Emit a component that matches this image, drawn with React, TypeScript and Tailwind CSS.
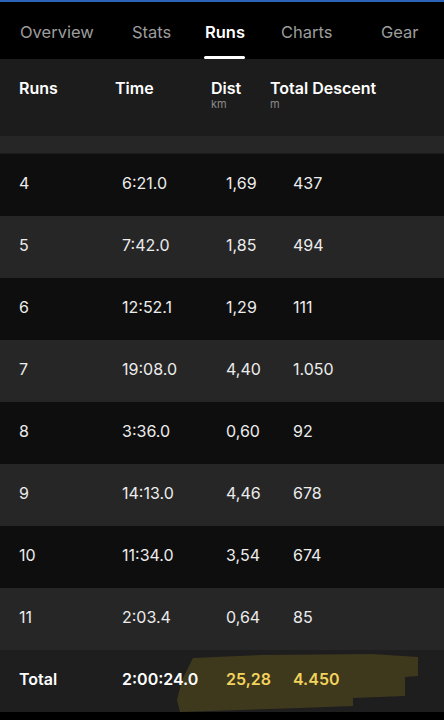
import React from 'react';

const runs = [
  { n: '4', time: '6:21.0', dist: '1,69', desc: '437' },
  { n: '5', time: '7:42.0', dist: '1,85', desc: '494' },
  { n: '6', time: '12:52.1', dist: '1,29', desc: '111' },
  { n: '7', time: '19:08.0', dist: '4,40', desc: '1.050' },
  { n: '8', time: '3:36.0', dist: '0,60', desc: '92' },
  { n: '9', time: '14:13.0', dist: '4,46', desc: '678' },
  { n: '10', time: '11:34.0', dist: '3,54', desc: '674' },
  { n: '11', time: '2:03.4', dist: '0,64', desc: '85' },
];

export default function App() {
  return (
    <div
      className="w-[444px] h-[720px] overflow-hidden bg-black text-white"
      style={{ fontFamily: 'Inter, "Noto Sans", sans-serif' }}
    >
      <div className="h-[2px] bg-[#2a63b8]" />

      {/* tabs */}
      <div className="relative h-[57px] text-[16.5px] text-[#9d9d9d]">
        <span className="absolute left-[20px] top-[18px]">Overview</span>
        <span className="absolute left-[132px] top-[18px]">Stats</span>
        <span className="absolute left-[205px] top-[18px] text-white font-semibold">Runs</span>
        <span className="absolute left-[281px] top-[18px]">Charts</span>
        <span className="absolute left-[381px] top-[18px]">Gear</span>
        <div className="absolute left-[204px] bottom-0 w-[41px] h-[3px] bg-white rounded-sm" />
      </div>

      {/* header */}
      <div className="h-[77px] bg-[#1c1c1c] flex pl-[19px] pt-[19px]">
        <div className="w-[96px] text-[16px] font-semibold leading-[20px]">Runs</div>
        <div className="w-[96px] text-[16px] font-semibold leading-[20px]">Time</div>
        <div className="w-[59px]">
          <div className="text-[16px] font-semibold leading-[20px]">Dist</div>
          <div className="text-[11px] text-[#8a8a8a] leading-[13px]">km</div>
        </div>
        <div>
          <div className="text-[16px] font-semibold leading-[20px]">Total Descent</div>
          <div className="text-[11px] text-[#8a8a8a] leading-[13px]">m</div>
        </div>
      </div>
      <div className="h-[18px] bg-[#262626] border-b border-[#1a1a1a]" />

      {runs.map((r, i) => (
        <div
          key={r.n}
          className={`h-[62px] flex items-center pl-[19px] pb-[5px] text-[16px] text-[#ececec] ${
            i % 2 === 0 ? 'bg-[#0e0e0e]' : 'bg-[#262626]'
          }`}
        >
          <div className="w-[103px]">{r.n}</div>
          <div className="w-[104px]">{r.time}</div>
          <div className="w-[67px]">{r.dist}</div>
          <div>{r.desc}</div>
        </div>
      ))}

      {/* total */}
      <div className="relative h-[62px] bg-[#1e1e1e]">
        <svg className="absolute left-0 top-0" width="444" height="62" viewBox="0 0 444 62">
          <path
            d="M193 8 L260 5 L372 4 L418 7 L418 26 L405 27 L405 46 L353 48 L353 56 L300 58 L180 62 L177 50 L182 30 Z"
            fill="#e8c21a"
            fillOpacity="0.16"
          />
        </svg>
        <div className="relative h-full flex items-center pl-[19px] pb-[5px] text-[16px] font-semibold">
          <div className="w-[103px] text-white">Total</div>
          <div className="w-[104px] text-white">2:00:24.0</div>
          <div className="w-[67px] text-[#f2d35c]">25,28</div>
          <div className="text-[#f2d35c]">4.450</div>
        </div>
      </div>
    </div>
  );
}
